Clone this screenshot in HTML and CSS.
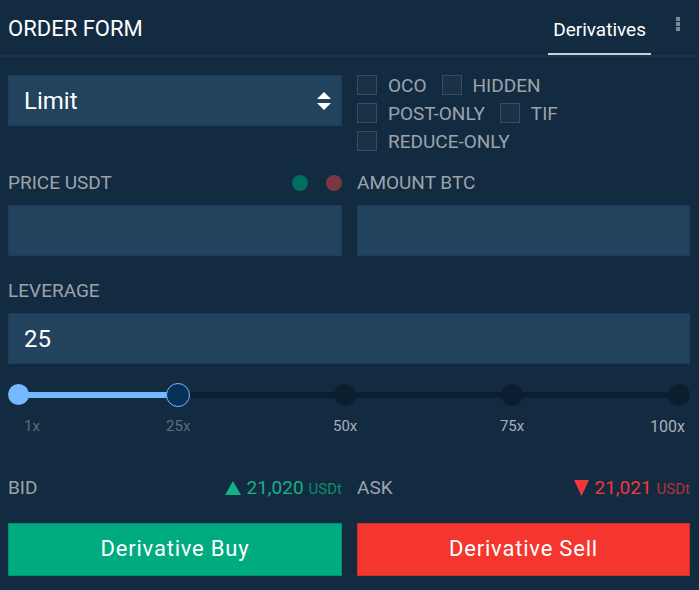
FILE: index.html
```html
<!DOCTYPE html>
<html lang="en">
<head>
    <meta charset="UTF-8">
    <meta name="viewport" content="width=device-width, initial-scale=1.0">
    <title>Order Form</title>
    <link rel="stylesheet" href="styles.css">
</head>
<body>
    <div class="panel">
        <!-- Header -->
        <div class="header">
            <div class="title">ORDER FORM</div>
            <div class="tab">Derivatives</div>
            <div class="menu"><span></span><span></span><span></span></div>
        </div>

        <div class="body">
            <!-- Type + flags -->
            <div class="row top-row">
                <div class="select">
                    <span>Limit</span>
                    <svg class="arrows" width="14" height="18" viewBox="0 0 14 18">
                        <path d="M7 0 L14 7 L0 7 Z" fill="#fff"/>
                        <path d="M0 11 L14 11 L7 18 Z" fill="#fff"/>
                    </svg>
                </div>
                <div class="flags">
                    <div class="flag-line">
                        <label class="check"><span class="box"></span>OCO</label>
                        <label class="check"><span class="box"></span>HIDDEN</label>
                    </div>
                    <div class="flag-line">
                        <label class="check"><span class="box"></span>POST-ONLY</label>
                        <label class="check"><span class="box"></span>TIF</label>
                    </div>
                    <div class="flag-line">
                        <label class="check"><span class="box"></span>REDUCE-ONLY</label>
                    </div>
                </div>
            </div>

            <!-- Price / amount -->
            <div class="row labels-row">
                <div class="label-line">
                    <span class="label">PRICE USDT</span>
                    <span class="dots"><i class="dot green"></i><i class="dot red"></i></span>
                </div>
                <div class="label-line"><span class="label">AMOUNT BTC</span></div>
            </div>
            <div class="row">
                <div class="field"></div>
                <div class="field"></div>
            </div>

            <!-- Leverage -->
            <div class="label lev-label">LEVERAGE</div>
            <div class="field wide">25</div>

            <div class="slider">
                <div class="track"></div>
                <div class="track-fill" style="width: 24.24%"></div>
                <i class="stop on" style="left: 0%"></i>
                <i class="stop" style="left: 49.49%"></i>
                <i class="stop" style="left: 74.75%"></i>
                <i class="stop" style="left: 100%"></i>
                <i class="thumb" style="left: 24.24%"></i>
            </div>
            <div class="ticks">
                <span class="tick dim first">1x</span>
                <span class="tick dim mid" style="left: 24.24%">25x</span>
                <span class="tick mid" style="left: 49.49%">50x</span>
                <span class="tick mid" style="left: 74.75%">75x</span>
                <span class="tick last">100x</span>
            </div>

            <!-- Bid / ask -->
            <div class="row quote-row">
                <div class="quote">
                    <span class="label">BID</span>
                    <span class="price up">
                        <svg class="tri" width="16" height="14" viewBox="0 0 16 14"><path d="M8 0 L16 14 L0 14 Z" fill="#14b089"/></svg>
                        21,020 <small>USDt</small>
                    </span>
                </div>
                <div class="quote">
                    <span class="label">ASK</span>
                    <span class="price down">
                        <svg class="tri" width="15" height="16" viewBox="0 0 15 16"><path d="M0 0 L15 0 L7.5 16 Z" fill="#f2373a"/></svg>
                        21,021 <small>USDt</small>
                    </span>
                </div>
            </div>

            <div class="row">
                <button class="btn buy">Derivative Buy</button>
                <button class="btn sell">Derivative Sell</button>
            </div>
        </div>
    </div>
</body>
</html>
```

FILE: styles.css
```css
body { margin: 0; background: #132b41; font-family: Roboto, "Liberation Sans", sans-serif; color: #fff; }
.panel { width: 699px; height: 590px; background: #132b41; }

.header { height: 55px; display: flex; align-items: center; padding: 0 0 0 8px; border-bottom: 2px solid #1c3244; }
.title { font-size: 22px; flex: 1; padding-top: 2px; }
.tab { font-size: 19px; padding: 2px 5px 0; height: 53px; line-height: 52px; box-sizing: border-box; border-bottom: 2px solid #c9d1d8; align-self: flex-end; }
.menu { width: 48px; box-sizing: border-box; padding-left: 6px; display: flex; flex-direction: column; align-items: center; gap: 1px; align-self: flex-start; margin-top: 17px; }
.menu span { width: 4px; height: 4px; background: #7d8892; }

.body { padding: 18px 9px 0 8px; }
.row { display: grid; grid-template-columns: 334px 333px; column-gap: 15px; }

.select { height: 51px; box-sizing: border-box; background: #22425e; border: 1px solid #1a3c5e; display: flex; align-items: center; justify-content: space-between; padding: 0 10px 0 15px; font-size: 24px; }
.arrows { margin-top: 1px; }

.flags { display: flex; flex-direction: column; gap: 8px; }
.flag-line { display: flex; gap: 15px; height: 20px; }
.check { display: flex; align-items: center; gap: 11px; font-size: 19px; color: #9ca4ab; line-height: 20px; padding-top: 1px; }
.box { width: 18px; height: 18px; border: 1px solid #3a4b5a; background: #1a3247; margin-top: -1px; }

.labels-row { margin-top: 22px; height: 20px; }
.label-line { display: flex; justify-content: space-between; align-items: center; }
.label { font-size: 19px; color: #9ca4ab; line-height: 20px; }
.dots { display: flex; gap: 18px; }
.dot { width: 16px; height: 16px; border-radius: 50%; display: block; }
.dot.green { background: #006d5e; }
.dot.red { background: #7a3743; }

.field { height: 51px; box-sizing: border-box; background: #22425e; border: 1px solid #1a3c5e; margin-top: 12px; }
.field.wide { display: flex; align-items: center; padding-left: 15px; font-size: 24px; }
.lev-label { margin-top: 25px; }

.slider { position: relative; height: 24px; margin: 19px 11px 0 10px; }
.track { position: absolute; left: 0; right: 0; top: 9px; height: 6px; background: #0c1f30; }
.track-fill { position: absolute; left: 0; top: 9px; height: 6px; background: #74b9ff; }
.stop { position: absolute; top: 1px; width: 22px; height: 22px; margin-left: -11px; border-radius: 50%; background: #0c1f30; }
.stop.on { background: #74b9ff; width: 21px; height: 21px; margin-left: -10px; }
.thumb { position: absolute; top: 0; width: 22px; height: 22px; margin-left: -12px; border-radius: 50%; background: #073159; border: 1px solid #74b9ff; }

.ticks { position: relative; height: 20px; margin: 10px 11px 0 10px; font-size: 15px; }
.tick { position: absolute; top: 0; color: #a8b0b7; }
.tick.mid { transform: translateX(-50%); }
.tick.dim { color: #5f6d79; }
.tick.first { left: 6px; }
.tick.last { right: -6px; font-size: 16px; }

.quote-row { margin-top: 39px; }
.quote { display: flex; justify-content: space-between; align-items: baseline; }
.price { font-size: 19px; display: flex; align-items: baseline; gap: 5px; }
.price small { font-size: 15px; }
.price .tri { align-self: center; }
.up { color: #14b089; }
.up small { color: #0a8b6c; }
.down { color: #f2373a; }
.down small { color: #b53238; }

.btn { margin-top: 24px; height: 53px; border: 1px solid rgba(0,0,0,0.15); color: #fff; font-family: Roboto, "Liberation Sans", sans-serif; font-size: 22px; letter-spacing: 0.8px; padding-bottom: 3px; cursor: pointer; }
.buy { background: #00ab7f; }
.sell { background: #f4362f; }
```
